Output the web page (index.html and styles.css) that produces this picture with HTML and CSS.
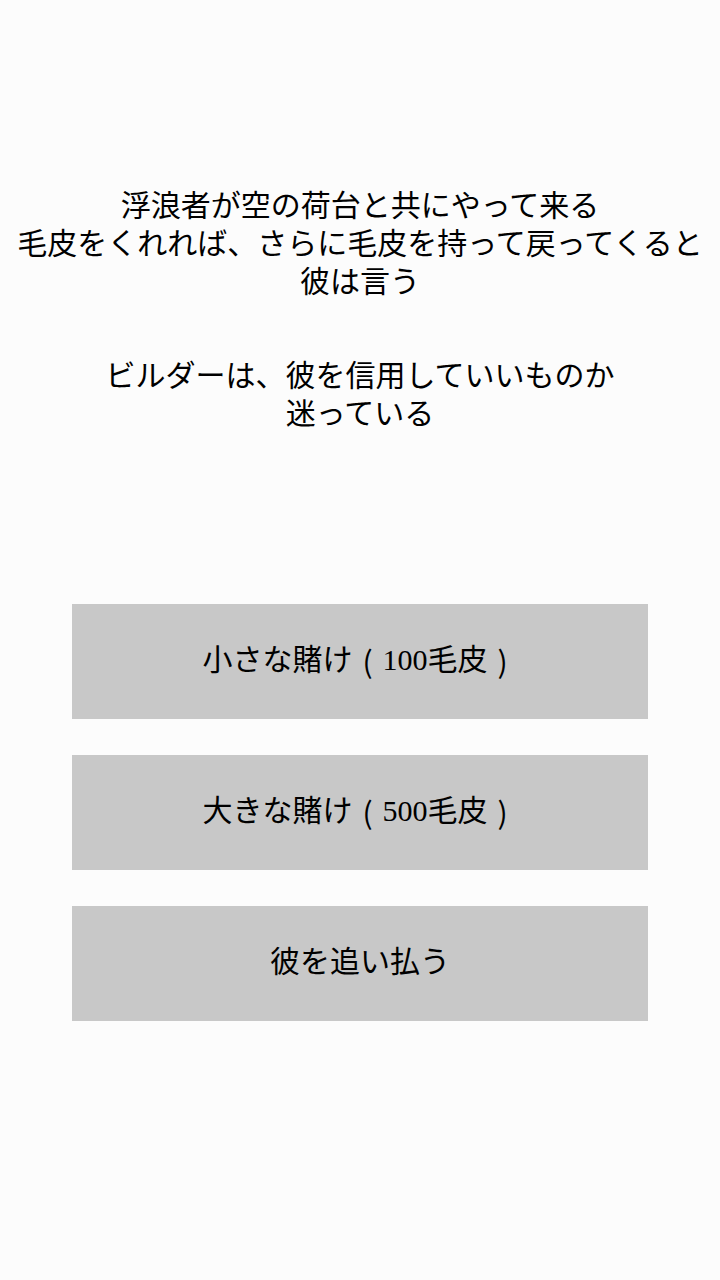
FILE: index.html
```html
<!DOCTYPE html>
<html lang="ja">
<head>
    <meta charset="UTF-8">
    <meta name="viewport" content="width=device-width, initial-scale=1.0">
    <title>浮浪者</title>
    <link rel="stylesheet" href="styles.css">
</head>
<body>
    <div id="event">
        <div id="story">
            <p class="line-block">浮浪者が空の荷台と共にやって来る<br>毛皮をくれれば、さらに毛皮を持って戻ってくると<br>彼は言う</p>
            <p class="line-block">ビルダーは、彼を信用していいものか<br>迷っている</p>
        </div>
        <div id="choices">
            <button class="choice">小さな賭け<span class="paren">(</span>100毛皮<span class="paren">)</span></button>
            <button class="choice">大きな賭け<span class="paren">(</span>500毛皮<span class="paren">)</span></button>
            <button class="choice">彼を追い払う</button>
        </div>
    </div>
</body>
</html>
```

FILE: styles.css
```css
body {
    margin: 0;
    background-color: #fcfcfc;
    color: #000;
    font-family: "Liberation Serif", "Noto Sans CJK JP", serif;
}

#event {
    display: flex;
    flex-direction: column;
    align-items: center;
    padding-top: 187px;
}

#story {
    display: flex;
    flex-direction: column;
    gap: 56px;
    text-align: center;
}

.line-block {
    margin: 0;
    font-size: 30px;
    line-height: 38px;
}

#choices {
    display: flex;
    flex-direction: column;
    gap: 36px;
    width: 576px;
    margin-top: 171px;
}

.choice {
    height: 115px;
    border: none;
    border-radius: 0;
    background-color: #c8c8c8;
    color: #000;
    font-family: inherit;
    font-size: 30px;
    line-height: 38px;
    display: flex;
    align-items: center;
    justify-content: center;
    padding: 0 0 4px;
    cursor: pointer;
}

/* full-width brackets with the glyph centred in its cell */
.paren {
    display: inline-block;
    width: 1em;
    text-align: center;
    font-family: "Noto Sans CJK JP", sans-serif;
}
```
